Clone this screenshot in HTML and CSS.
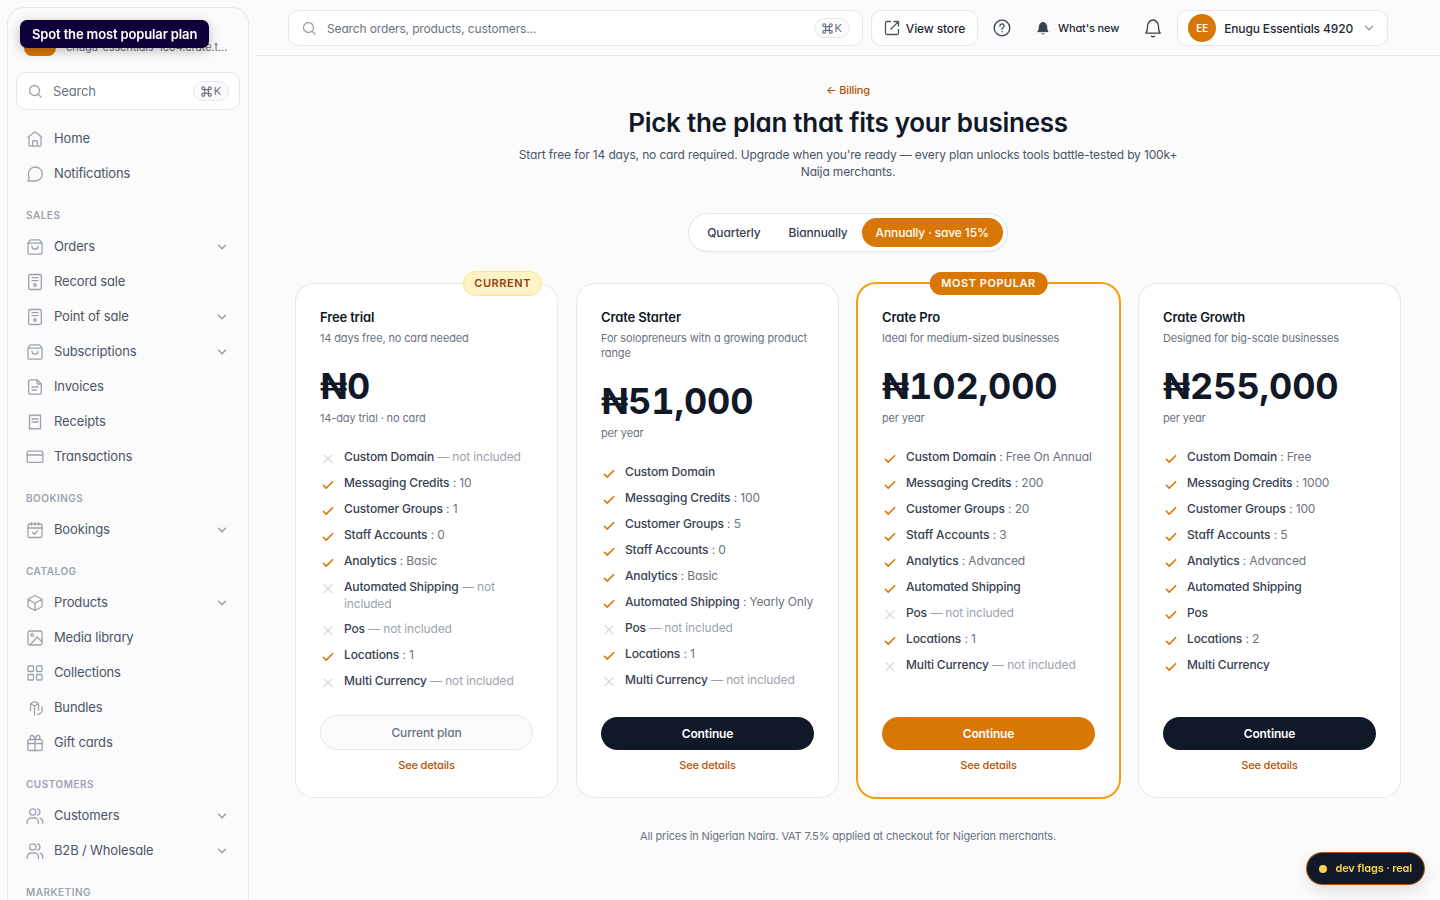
FILE: index.html
```html
<!DOCTYPE html>
<html lang="en">
<head>
  <meta charset="UTF-8">
  <meta name="viewport" content="width=device-width, initial-scale=1">
  <title>Pick a plan</title>
  <link rel="stylesheet" href="styles.css">
</head>
<body>
  <!-- icon sprite -->
  <svg class="sprite" aria-hidden="true">
    <symbol id="i-search" viewBox="0 0 16 16"><circle cx="7.5" cy="7.5" r="5"/><path d="M11.200 11.200 14 14"/></symbol>
    <symbol id="i-cmd" viewBox="0 0 12 12"><path d="M4 4h4v4H4zM4 4H2.600A1.600 1.600 0 1 1 4 2.600zM8 4V2.600A1.600 1.600 0 1 1 9.400 4zM8 8h1.400A1.600 1.600 0 1 1 8 9.400zM4 8v1.400A1.600 1.600 0 1 1 2.600 8z"/></symbol>
    <symbol id="i-chevron" viewBox="0 0 16 16"><path d="m4.500 6.300 3.500 3.500 3.500-3.500"/></symbol>
    <symbol id="i-home" viewBox="0 0 18 18"><path d="M2 7.200 9 1.800l7 5.400M3 6.500v8.200a1.500 1.500 0 0 0 1.500 1.500h9a1.500 1.500 0 0 0 1.500-1.500V6.500M6.700 16v-4.500a.8.8 0 0 1 .8-.8h3a.8.8 0 0 1 .8.8V16"/></symbol>
    <symbol id="i-chat" viewBox="0 0 18 18"><path d="M9.300 16A7 7 0 1 0 3 12.100c.3.700.1 1.200-.2 2.100L2 16z"/></symbol>
    <symbol id="i-bag" viewBox="0 0 18 18"><path d="M2 5.200 3.800 2.500a1.500 1.500 0 0 1 1.200-.7h8a1.500 1.500 0 0 1 1.200.7L16 5.200V14.700a1.500 1.500 0 0 1-1.500 1.500h-11A1.500 1.500 0 0 1 2 14.700zM2 5.200h14M6 8.200a3 3 0 0 0 6 0"/></symbol>
    <symbol id="i-pos" viewBox="0 0 18 18"><rect x="2.700" y="1.500" width="12.600" height="15" rx="1.500"/><path d="M6 4.700h6M6 7.700h6"/><circle cx="9" cy="12" r="1.300"/></symbol>
    <symbol id="i-invoice" viewBox="0 0 18 18"><path d="M11 1.800H4.200a1.500 1.500 0 0 0-1.500 1.500v11.400a1.500 1.500 0 0 0 1.500 1.500h9.600a1.500 1.500 0 0 0 1.500-1.500V6zM11 1.800V5a1 1 0 0 0 1 1h3.300M6 9h6M6 12h4.500"/></symbol>
    <symbol id="i-receipt" viewBox="0 0 18 18"><path d="M3.500 1.800 5 2.700l1.300-.9 1.400.9L9 1.800l1.300.9 1.400-.9 1.300.9 1.500-.9v14.400l-1.500-.9-1.300.9-1.400-.9-1.300.9-1.300-.9-1.400.9-1.300-.9-1.500.9zM6 6h6M6 9h6"/></symbol>
    <symbol id="i-card" viewBox="0 0 18 18"><rect x="1.200" y="3.200" width="15.600" height="11.200" rx="1.500"/><path d="M1.200 7h15.600"/></symbol>
    <symbol id="i-calendar" viewBox="0 0 18 18"><rect x="2" y="3" width="14" height="13.500" rx="1.500"/><path d="M2 7h14M5.500 1.300v3M9 1.300v3M12.500 1.300v3M6.500 11.500l1.800 1.800 3.200-3.300"/></symbol>
    <symbol id="i-cube" viewBox="0 0 18 18"><path d="m9 1.500 7 3.800v7.400l-7 3.800-7-3.800V5.300zM2 5.300l7 3.900 7-3.900M9 9.200v7.300"/></symbol>
    <symbol id="i-image" viewBox="0 0 18 18"><rect x="2" y="2" width="14" height="14" rx="1.500"/><circle cx="6.200" cy="6" r="1.300"/><path d="m4 16 7.200-8 4.800 5"/></symbol>
    <symbol id="i-grid" viewBox="0 0 18 18"><rect x="2" y="2" width="5.500" height="5.500" rx=".7"/><rect x="10.500" y="2" width="5.500" height="5.500" rx=".7"/><rect x="2" y="10.500" width="5.500" height="5.500" rx=".7"/><rect x="10.500" y="10.500" width="5.500" height="5.500" rx=".7"/></symbol>
    <symbol id="i-bundle" viewBox="0 0 18 18"><path d="M4.500 11.500V5.300a1 1 0 0 1 .5-.9l3-1.700a1 1 0 0 1 1 0l3 1.700a1 1 0 0 1 .5.900v6M4.800 4.800 8.500 7l3.800-2.200M8.500 7v9M16 8v4.500a1.500 1.500 0 0 1-.8 1.300L12 15.600"/></symbol>
    <symbol id="i-gift" viewBox="0 0 18 18"><rect x="1.800" y="5.500" width="14.400" height="11" rx="1.500"/><path d="M1.800 9.500h14.400M9 5.500v11M9 5.500C8.500 3 7.500 1.500 5.800 1.500a1.800 1.800 0 0 0-1.500 2.800L5 5.500M9 5.500c.5-2.500 1.500-4 3.200-4a1.800 1.800 0 0 1 1.500 2.800L13 5.500"/></symbol>
    <symbol id="i-users" viewBox="0 0 18 18"><circle cx="6.800" cy="5" r="3.200"/><path d="M1.200 16.500v-1.500a4 4 0 0 1 4-4h3.200a4 4 0 0 1 4 4v1.500M11.500 1.900a3.200 3.200 0 0 1 0 6.200M14 11.200a4 4 0 0 1 2.800 3.800v1.500"/></symbol>
    <symbol id="i-external" viewBox="0 0 16 16"><path d="M6.500 1.500H3A1.500 1.500 0 0 0 1.500 3v10A1.500 1.500 0 0 0 3 14.500h10a1.500 1.500 0 0 0 1.500-1.500V9.500M10 1.500h4.500V6M14.300 1.700 7 9"/></symbol>
    <symbol id="i-help" viewBox="0 0 18 18"><circle cx="9" cy="9" r="7.800"/><path d="M6.900 7.100A2.100 2.100 0 1 1 9.700 9c-.5.300-.7.600-.7 1.300M9 12.600v.2"/></symbol>
    <symbol id="i-bell" viewBox="0 0 20 20"><path d="M2.800 15.200h14.400c-1.300-1.500-1.700-3-1.700-6.200 0-4-2.300-7-5.500-7S4.500 5 4.500 9c0 3.200-.4 4.700-1.700 6.200zM8.500 18.200c.8.600 2.200.6 3 0"/></symbol>
    <symbol id="i-check" viewBox="0 0 16 16"><path d="m3.400 9.300 2.800 2.800 6.400-6.400"/></symbol>
    <symbol id="i-cross" viewBox="0 0 16 16"><path d="m4 4.700 8 8M12 4.700l-8 8"/></symbol>
  </svg>

  <div class="tooltip" role="status">Spot the most popular plan</div>

  <div class="layout">
    <aside class="sidebar">
      <div class="sidebar-panel">
        <div class="store">
          <span class="store-logo"></span>
          <div class="store-text">
            <div class="store-name">Enugu Essentials</div>
            <div class="store-url">enugu-essentials-1c04.crate.test</div>
          </div>
        </div>

        <label class="search side-search">
          <svg class="icon-16"><use href="#i-search"/></svg>
          <input type="search" placeholder="Search" aria-label="Search">
          <kbd><svg class="icon-11"><use href="#i-cmd"/></svg>K</kbd>
        </label>

        <nav class="nav">
          <a class="nav-item" href="#"><svg class="icon-18"><use href="#i-home"/></svg>Home</a>
          <a class="nav-item" href="#"><svg class="icon-18"><use href="#i-chat"/></svg>Notifications</a>

          <h2 class="nav-heading">Sales</h2>
          <button class="nav-item" type="button"><svg class="icon-18"><use href="#i-bag"/></svg>Orders<svg class="icon-16 chevron"><use href="#i-chevron"/></svg></button>
          <a class="nav-item" href="#"><svg class="icon-18"><use href="#i-pos"/></svg>Record sale</a>
          <button class="nav-item" type="button"><svg class="icon-18"><use href="#i-pos"/></svg>Point of sale<svg class="icon-16 chevron"><use href="#i-chevron"/></svg></button>
          <button class="nav-item" type="button"><svg class="icon-18"><use href="#i-bag"/></svg>Subscriptions<svg class="icon-16 chevron"><use href="#i-chevron"/></svg></button>
          <a class="nav-item" href="#"><svg class="icon-18"><use href="#i-invoice"/></svg>Invoices</a>
          <a class="nav-item" href="#"><svg class="icon-18"><use href="#i-receipt"/></svg>Receipts</a>
          <a class="nav-item" href="#"><svg class="icon-18"><use href="#i-card"/></svg>Transactions</a>

          <h2 class="nav-heading">Bookings</h2>
          <button class="nav-item" type="button"><svg class="icon-18"><use href="#i-calendar"/></svg>Bookings<svg class="icon-16 chevron"><use href="#i-chevron"/></svg></button>

          <h2 class="nav-heading">Catalog</h2>
          <button class="nav-item" type="button"><svg class="icon-18"><use href="#i-cube"/></svg>Products<svg class="icon-16 chevron"><use href="#i-chevron"/></svg></button>
          <a class="nav-item" href="#"><svg class="icon-18"><use href="#i-image"/></svg>Media library</a>
          <a class="nav-item" href="#"><svg class="icon-18"><use href="#i-grid"/></svg>Collections</a>
          <a class="nav-item" href="#"><svg class="icon-18"><use href="#i-bundle"/></svg>Bundles</a>
          <a class="nav-item" href="#"><svg class="icon-18"><use href="#i-gift"/></svg>Gift cards</a>

          <h2 class="nav-heading">Customers</h2>
          <button class="nav-item" type="button"><svg class="icon-18"><use href="#i-users"/></svg>Customers<svg class="icon-16 chevron"><use href="#i-chevron"/></svg></button>
          <button class="nav-item" type="button"><svg class="icon-18"><use href="#i-users"/></svg>B2B / Wholesale<svg class="icon-16 chevron"><use href="#i-chevron"/></svg></button>

          <h2 class="nav-heading">Marketing</h2>
        </nav>
      </div>
    </aside>

    <div class="main">
      <header class="topbar">
        <div class="topbar-inner">
          <label class="search top-search">
            <svg class="icon-16"><use href="#i-search"/></svg>
            <input type="search" placeholder="Search orders, products, customers..." aria-label="Search orders, products, customers">
            <kbd><svg class="icon-11"><use href="#i-cmd"/></svg>K</kbd>
          </label>
          <a class="top-box view-store" href="#"><svg class="icon-16"><use href="#i-external"/></svg>View store</a>
          <button class="icon-btn" type="button" aria-label="Help"><svg class="icon-18"><use href="#i-help"/></svg></button>
          <button class="whats-new" type="button"><svg class="icon-14 solid"><use href="#i-bell"/></svg>What's new</button>
          <button class="icon-btn" type="button" aria-label="Notifications"><svg class="icon-20"><use href="#i-bell"/></svg></button>
          <button class="top-box account" type="button"><span class="avatar">EE</span>Enugu Essentials 4920<svg class="icon-16 chevron"><use href="#i-chevron"/></svg></button>
        </div>
      </header>

      <main class="content">
        <div class="intro">
          <a class="back" href="#">← Billing</a>
          <h1>Pick the plan that fits your business</h1>
          <p>Start free for 14 days, no card required. Upgrade when you're ready — every plan unlocks tools battle-tested by 100k+ Naija merchants.</p>
        </div>

        <div class="period" role="group" aria-label="Billing period">
          <button type="button">Quarterly</button>
          <button type="button">Biannually</button>
          <button type="button" class="active" aria-pressed="true">Annually · save 15%</button>
        </div>

        <div class="plans">
          <section class="plan">
            <span class="badge badge-current">Current</span>
            <h3>Free trial</h3>
            <p class="tagline">14 days free, no card needed</p>
            <div class="price">₦0</div>
            <p class="term">14-day trial · no card</p>
            <ul class="features">
              <li class="off"><svg class="icon-16"><use href="#i-cross"/></svg><span><b>Custom Domain</b> — not included</span></li>
              <li><svg class="icon-16"><use href="#i-check"/></svg><span><b>Messaging Credits</b> : 10</span></li>
              <li><svg class="icon-16"><use href="#i-check"/></svg><span><b>Customer Groups</b> : 1</span></li>
              <li><svg class="icon-16"><use href="#i-check"/></svg><span><b>Staff Accounts</b> : 0</span></li>
              <li><svg class="icon-16"><use href="#i-check"/></svg><span><b>Analytics</b> : Basic</span></li>
              <li class="off"><svg class="icon-16"><use href="#i-cross"/></svg><span><b>Automated Shipping</b> — not included</span></li>
              <li class="off"><svg class="icon-16"><use href="#i-cross"/></svg><span><b>Pos</b> — not included</span></li>
              <li><svg class="icon-16"><use href="#i-check"/></svg><span><b>Locations</b> : 1</span></li>
              <li class="off"><svg class="icon-16"><use href="#i-cross"/></svg><span><b>Multi Currency</b> — not included</span></li>
            </ul>
            <button class="cta cta-current" type="button" disabled>Current plan</button>
            <a class="details" href="#">See details</a>
          </section>

          <section class="plan">
            <h3>Crate Starter</h3>
            <p class="tagline">For solopreneurs with a growing product range</p>
            <div class="price">₦51,000</div>
            <p class="term">per year</p>
            <ul class="features">
              <li><svg class="icon-16"><use href="#i-check"/></svg><span><b>Custom Domain</b></span></li>
              <li><svg class="icon-16"><use href="#i-check"/></svg><span><b>Messaging Credits</b> : 100</span></li>
              <li><svg class="icon-16"><use href="#i-check"/></svg><span><b>Customer Groups</b> : 5</span></li>
              <li><svg class="icon-16"><use href="#i-check"/></svg><span><b>Staff Accounts</b> : 0</span></li>
              <li><svg class="icon-16"><use href="#i-check"/></svg><span><b>Analytics</b> : Basic</span></li>
              <li><svg class="icon-16"><use href="#i-check"/></svg><span><b>Automated Shipping</b> : Yearly Only</span></li>
              <li class="off"><svg class="icon-16"><use href="#i-cross"/></svg><span><b>Pos</b> — not included</span></li>
              <li><svg class="icon-16"><use href="#i-check"/></svg><span><b>Locations</b> : 1</span></li>
              <li class="off"><svg class="icon-16"><use href="#i-cross"/></svg><span><b>Multi Currency</b> — not included</span></li>
            </ul>
            <button class="cta" type="button">Continue</button>
            <a class="details" href="#">See details</a>
          </section>

          <section class="plan popular">
            <span class="badge badge-popular">Most popular</span>
            <h3>Crate Pro</h3>
            <p class="tagline">Ideal for medium-sized businesses</p>
            <div class="price">₦102,000</div>
            <p class="term">per year</p>
            <ul class="features">
              <li><svg class="icon-16"><use href="#i-check"/></svg><span><b>Custom Domain</b> : Free On Annual</span></li>
              <li><svg class="icon-16"><use href="#i-check"/></svg><span><b>Messaging Credits</b> : 200</span></li>
              <li><svg class="icon-16"><use href="#i-check"/></svg><span><b>Customer Groups</b> : 20</span></li>
              <li><svg class="icon-16"><use href="#i-check"/></svg><span><b>Staff Accounts</b> : 3</span></li>
              <li><svg class="icon-16"><use href="#i-check"/></svg><span><b>Analytics</b> : Advanced</span></li>
              <li><svg class="icon-16"><use href="#i-check"/></svg><span><b>Automated Shipping</b></span></li>
              <li class="off"><svg class="icon-16"><use href="#i-cross"/></svg><span><b>Pos</b> — not included</span></li>
              <li><svg class="icon-16"><use href="#i-check"/></svg><span><b>Locations</b> : 1</span></li>
              <li class="off"><svg class="icon-16"><use href="#i-cross"/></svg><span><b>Multi Currency</b> — not included</span></li>
            </ul>
            <button class="cta" type="button">Continue</button>
            <a class="details" href="#">See details</a>
          </section>

          <section class="plan">
            <h3>Crate Growth</h3>
            <p class="tagline">Designed for big-scale businesses</p>
            <div class="price">₦255,000</div>
            <p class="term">per year</p>
            <ul class="features">
              <li><svg class="icon-16"><use href="#i-check"/></svg><span><b>Custom Domain</b> : Free</span></li>
              <li><svg class="icon-16"><use href="#i-check"/></svg><span><b>Messaging Credits</b> : 1000</span></li>
              <li><svg class="icon-16"><use href="#i-check"/></svg><span><b>Customer Groups</b> : 100</span></li>
              <li><svg class="icon-16"><use href="#i-check"/></svg><span><b>Staff Accounts</b> : 5</span></li>
              <li><svg class="icon-16"><use href="#i-check"/></svg><span><b>Analytics</b> : Advanced</span></li>
              <li><svg class="icon-16"><use href="#i-check"/></svg><span><b>Automated Shipping</b></span></li>
              <li><svg class="icon-16"><use href="#i-check"/></svg><span><b>Pos</b></span></li>
              <li><svg class="icon-16"><use href="#i-check"/></svg><span><b>Locations</b> : 2</span></li>
              <li><svg class="icon-16"><use href="#i-check"/></svg><span><b>Multi Currency</b></span></li>
            </ul>
            <button class="cta" type="button">Continue</button>
            <a class="details" href="#">See details</a>
          </section>
        </div>

        <p class="footnote">All prices in Nigerian Naira. VAT 7.5% applied at checkout for Nigerian merchants.</p>
      </main>
    </div>
  </div>

  <button class="dev-flags" type="button"><span class="dot"></span>dev flags · real</button>
</body>
</html>
```
FILE: styles.css
```css
* { box-sizing: border-box; }
html { font-size: 14px; letter-spacing: -0.01em; }
body {
  margin: 0;
  background: #fbfbfc;
  color: #111827;
  font-family: Inter, "Liberation Sans", sans-serif;
  font-size: 12px;
  line-height: 17px;
  font-feature-settings: "cv11";
}
h1, h2, h3, p, ul { margin: 0; padding: 0; }
a { color: inherit; text-decoration: none; }
button, input { font: inherit; font-feature-settings: inherit; letter-spacing: inherit; color: inherit; border: 0; background: none; padding: 0; }
button { cursor: pointer; }

/* icons */
.sprite { display: none; }
svg { flex: none; fill: none; stroke: currentColor; stroke-width: 1.3; stroke-linecap: round; stroke-linejoin: round; }
.icon-11 { width: 11px; height: 11px; }
.icon-14 { width: 14px; height: 14px; }
.icon-16 { width: 16px; height: 16px; }
.icon-18 { width: 18px; height: 18px; }
.icon-20 { width: 20px; height: 20px; }
.solid { fill: currentColor; }
.chevron { stroke-width: 1.6; color: #9ca3af; }

.layout { display: flex; height: 100vh; overflow: hidden; }

/* sidebar */
.sidebar { width: 256px; flex: none; padding: 8px 8px 0; }
.sidebar-panel { height: 100%; overflow: hidden; padding: 0 8px; border-radius: 16px 16px 0 0; box-shadow: 0 0 0 1px #e5e7eb; }
.store { display: flex; gap: 10px; padding: 16px 12px 16px 8px; }
.store-logo { width: 32px; height: 32px; flex: none; border-radius: 8px; background: #d97706; }
.store-text { min-width: 0; flex: 1; }
.store-name { font-weight: 600; line-height: 16px; }
.store-url { font-size: 11px; line-height: 15px; color: #6b7280; overflow: hidden; text-overflow: ellipsis; white-space: nowrap; }

.search { display: flex; align-items: center; background: #fff; border: 1px solid #e5e7eb; border-radius: 10px; color: #9ca3af; }
.search input { flex: 1; min-width: 0; outline: none; color: #111827; }
.search input::placeholder { color: #6b7280; opacity: 1; }
.side-search { height: 38px; padding: 0 10px; gap: 10px; font-size: 13px; }
kbd { display: flex; align-items: center; gap: 2px; height: 20px; padding: 0 7px; border: 1px solid #e5e7eb; border-radius: 10px; background: #fbfbfc; color: #6b7280; font-family: inherit; font-size: 11px; }

.nav { padding-top: 11px; }
.nav-item { display: flex; align-items: center; gap: 10px; width: 100%; padding: 8px 10px; font-size: 13px; line-height: 19px; color: #4b5563; text-align: left; }
.nav-item .icon-18 { color: #9ca3af; }
.nav-item .chevron { margin-left: auto; }
.nav-heading { padding: 18px 10px 7px; font-size: 10px; line-height: 13px; font-weight: 600; letter-spacing: 0.05em; text-transform: uppercase; color: #9ca3af; }

/* top bar */
.main { flex: 1; min-width: 0; overflow: auto; }
.topbar { padding: 10px 32px 9px; border-bottom: 1px solid #e5e7eb; }
.topbar-inner { display: flex; align-items: center; max-width: 1100px; }
.top-search { flex: 1; height: 36px; padding: 0 12px; gap: 10px; }
.top-box { display: flex; align-items: center; gap: 8px; height: 36px; background: #fff; border: 1px solid #e5e7eb; border-radius: 10px; font-weight: 500; color: #1f2937; }
.view-store { gap: 6px; margin-left: 8px; padding: 0 12px; }
.view-store svg { color: #4b5563; }
.icon-btn { display: grid; place-items: center; width: 48px; height: 36px; color: #374151; }
.whats-new { display: flex; align-items: center; gap: 8px; padding: 0 10px; font-size: 11px; font-weight: 500; color: #1f2937; }
.whats-new svg { color: #374151; }
.account { padding: 0 10px; }
.avatar { display: grid; place-items: center; width: 28px; height: 28px; border-radius: 50%; background: #d97706; color: #fff; font-size: 10px; font-weight: 600; }

/* page */
.content { padding: 26px 40px 32px; text-align: center; }
.intro { max-width: 672px; margin: 0 auto; }
.back { display: block; font-size: 11px; font-weight: 500; color: #b45309; }
h1 { margin-top: 8px; font-size: 26px; line-height: 32px; font-weight: 600; letter-spacing: -0.01em; }
.intro p { margin-top: 7px; color: #4b5563; }

.period { display: flex; width: fit-content; margin: 34px auto 33px; padding: 4px; border-radius: 20px; background: #fff; box-shadow: 0 0 0 1px #e5e7eb, 0 1px 3px rgba(0, 0, 0, 0.08); }
.period button { padding: 6px 14px; border-radius: 15px; font-weight: 500; color: #374151; }
.period .active { background: #d97706; color: #fff; }

.plans { display: grid; grid-template-columns: repeat(4, 1fr); gap: 20px; text-align: left; }
.plan { position: relative; display: flex; flex-direction: column; padding: 24px; border-radius: 18px; background: #fff; box-shadow: 0 0 0 1px #e5e7eb; }
.popular { box-shadow: 0 0 0 2px #f59e0b; }
h3 { font-size: 13px; line-height: 18px; font-weight: 600; }
.tagline { margin-top: 5px; font-size: 11px; line-height: 15px; color: #6b7280; }
.price { margin-top: 19px; font-size: 36px; line-height: 42px; font-weight: 700; font-variant-numeric: tabular-nums; }
.term { margin-top: 4px; font-size: 11px; line-height: 15px; color: #6b7280; }

.features { flex: 1; display: flex; flex-direction: column; gap: 8px; margin: 22px 0 25px; list-style: none; color: #6b7280; }
.features li { display: flex; gap: 8px; }
.features svg { margin-top: 2px; color: #d97706; stroke-width: 1.6; }
.features b { font-weight: 500; color: #374151; }
.features .off { color: #9ca3af; }
.features .off svg { color: #d1d5db; stroke-width: 1.2; }

.cta { padding: 8px; border-radius: 18px; background: #111827; color: #fff; font-weight: 600; }
.popular .cta { background: #d97706; }
.cta-current { border: 1px solid #e5e7eb; background: #fbfbfc; color: #6b7280; font-weight: 500; }
.details { margin-top: 8px; font-size: 11px; line-height: 15px; font-weight: 500; text-align: center; color: #b45309; }

.badge { position: absolute; padding: 4px 12px; border-radius: 13px; font-size: 11px; line-height: 15px; font-weight: 600; letter-spacing: 0.05em; text-transform: uppercase; }
.badge-current { top: -13px; right: 15px; padding: 4px 10px; border: 1px solid #fde68a; background: #fef3c7; color: #92400e; }
.badge-popular { top: -12px; left: 50%; transform: translateX(-50%); white-space: nowrap; background: #d97706; color: #fff; }

.footnote { margin-top: 31px; font-size: 11px; color: #6b7280; }

/* overlays */
.tooltip { position: fixed; z-index: 10; top: 20px; left: 20px; padding: 5px 12px; border-radius: 7px; background: #10003a; color: #fff; font-size: 13px; line-height: 18px; font-weight: 600; font-feature-settings: normal; box-shadow: 0 3px 12px rgba(0, 0, 0, 0.25); }
.dev-flags { position: fixed; right: 16px; bottom: 16px; display: flex; align-items: center; gap: 8px; padding: 7px 12px; border-radius: 16px; background: #111827; color: #fcd34d; font-size: 11px; font-weight: 600; box-shadow: 0 0 0 1px #b45309, 0 6px 16px rgba(0, 0, 0, 0.12); }
.dot { width: 8px; height: 8px; border-radius: 50%; background: #fcd34d; }
```
